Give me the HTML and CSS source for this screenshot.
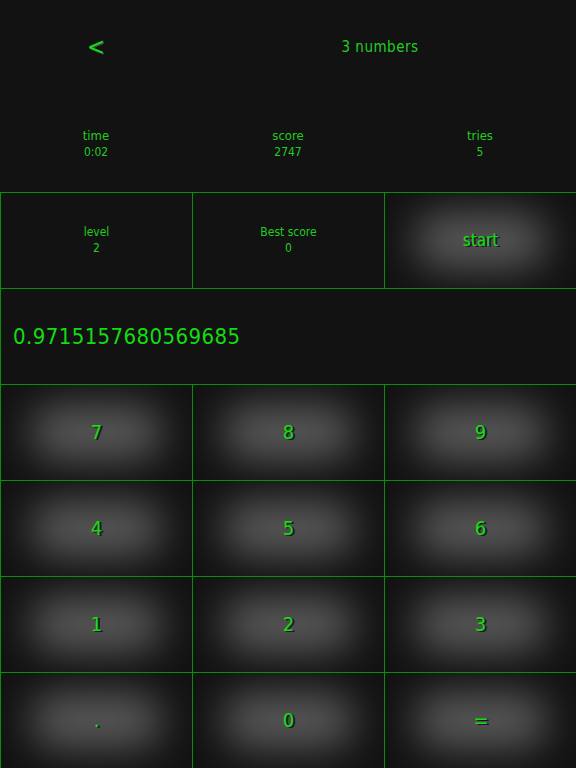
FILE: index.html
```html
<!DOCTYPE html>
<html>
<head>
<meta charset="utf-8">
<link rel="stylesheet" href="styles.css">
</head>
<body>
<div class="app">
  <header class="top">
    <div class="nav">
      <div class="back">&lt;</div>
      <div class="title">3 numbers</div>
    </div>
    <div class="stats">
      <div class="stat"><div class="label">time</div><div class="value">0:02</div></div>
      <div class="stat"><div class="label">score</div><div class="value">2747</div></div>
      <div class="stat"><div class="label">tries</div><div class="value">5</div></div>
    </div>
  </header>
  <div class="grid">
    <div class="cell info"><div class="label">level</div><div class="value">2</div></div>
    <div class="cell info"><div class="label">Best score</div><div class="value">0</div></div>
    <div class="cell key start"><span>start</span></div>
    <div class="cell display">0.9715157680569685</div>
    <div class="cell key"><span>7</span></div>
    <div class="cell key"><span>8</span></div>
    <div class="cell key"><span>9</span></div>
    <div class="cell key"><span>4</span></div>
    <div class="cell key"><span>5</span></div>
    <div class="cell key"><span>6</span></div>
    <div class="cell key"><span>1</span></div>
    <div class="cell key"><span>2</span></div>
    <div class="cell key"><span>3</span></div>
    <div class="cell key"><span>.</span></div>
    <div class="cell key"><span>0</span></div>
    <div class="cell key eq"><span>=</span></div>
  </div>
</div>
</body>
</html>
```
FILE: styles.css
```css
html, body {
  margin: 0;
  padding: 0;
  background: #121212;
}
body {
  font-family: "DejaVu Sans", sans-serif;
  font-stretch: condensed;
  color: #22cc22;
}
.app {
  width: 576px;
  height: 768px;
  overflow: hidden;
}
.top {
  height: 192px;
  display: flex;
  flex-direction: column;
}
.nav {
  height: 96px;
  display: flex;
  align-items: center;
}
.back {
  width: 192px;
  text-align: center;
  font-size: 24px;
  color: #11dd11;
  text-shadow: 1px 1px 0 #444;
  margin-top: -3px;
}
.title {
  width: 384px;
  text-align: center;
  font-size: 15px;
  letter-spacing: 0.5px;
  margin-left: -4px;
  margin-top: -2px;
}
.stats {
  height: 96px;
  display: grid;
  grid-template-columns: repeat(3, 1fr);
  align-items: center;
}
.stat {
  text-align: center;
}
.label {
  font-size: 13px;
  line-height: 17px;
}
.value {
  font-size: 12px;
  line-height: 17px;
}
.grid {
  display: grid;
  grid-template-columns: repeat(3, 192px);
  grid-auto-rows: 96px;
  border-top: 1px solid #0b8c0b;
  border-left: 1px solid #0b8c0b;
  box-sizing: border-box;
  width: 576px;
}
.cell {
  border-right: 1px solid #0b8c0b;
  border-bottom: 1px solid #0b8c0b;
  box-sizing: border-box;
  display: flex;
  align-items: center;
  justify-content: center;
  position: relative;
  overflow: hidden;
}
.info {
  flex-direction: column;
}
.info .label {
  font-size: 12px;
  line-height: 16px;
  margin-top: -2px;
}
.info .value {
  font-size: 12px;
  line-height: 16px;
}
.display {
  grid-column: 1 / 4;
  justify-content: flex-start;
  padding-left: 12px;
  font-size: 22px;
  color: #11dd11;
  letter-spacing: 0.4px;
}
.key::before {
  content: "";
  position: absolute;
  left: 30px;
  right: 30px;
  top: 20px;
  bottom: 20px;
  background: #5a5a5a;
  border-radius: 24px;
  filter: blur(20px);
}
.key span {
  position: relative;
  font-size: 20px;
  color: #11dd11;
  text-shadow: 2px 1px 0 #1a1a1a;
  margin-top: -2px;
}
.start span {
  font-size: 17px;
}
.eq {
  border-right: none;
}
```
